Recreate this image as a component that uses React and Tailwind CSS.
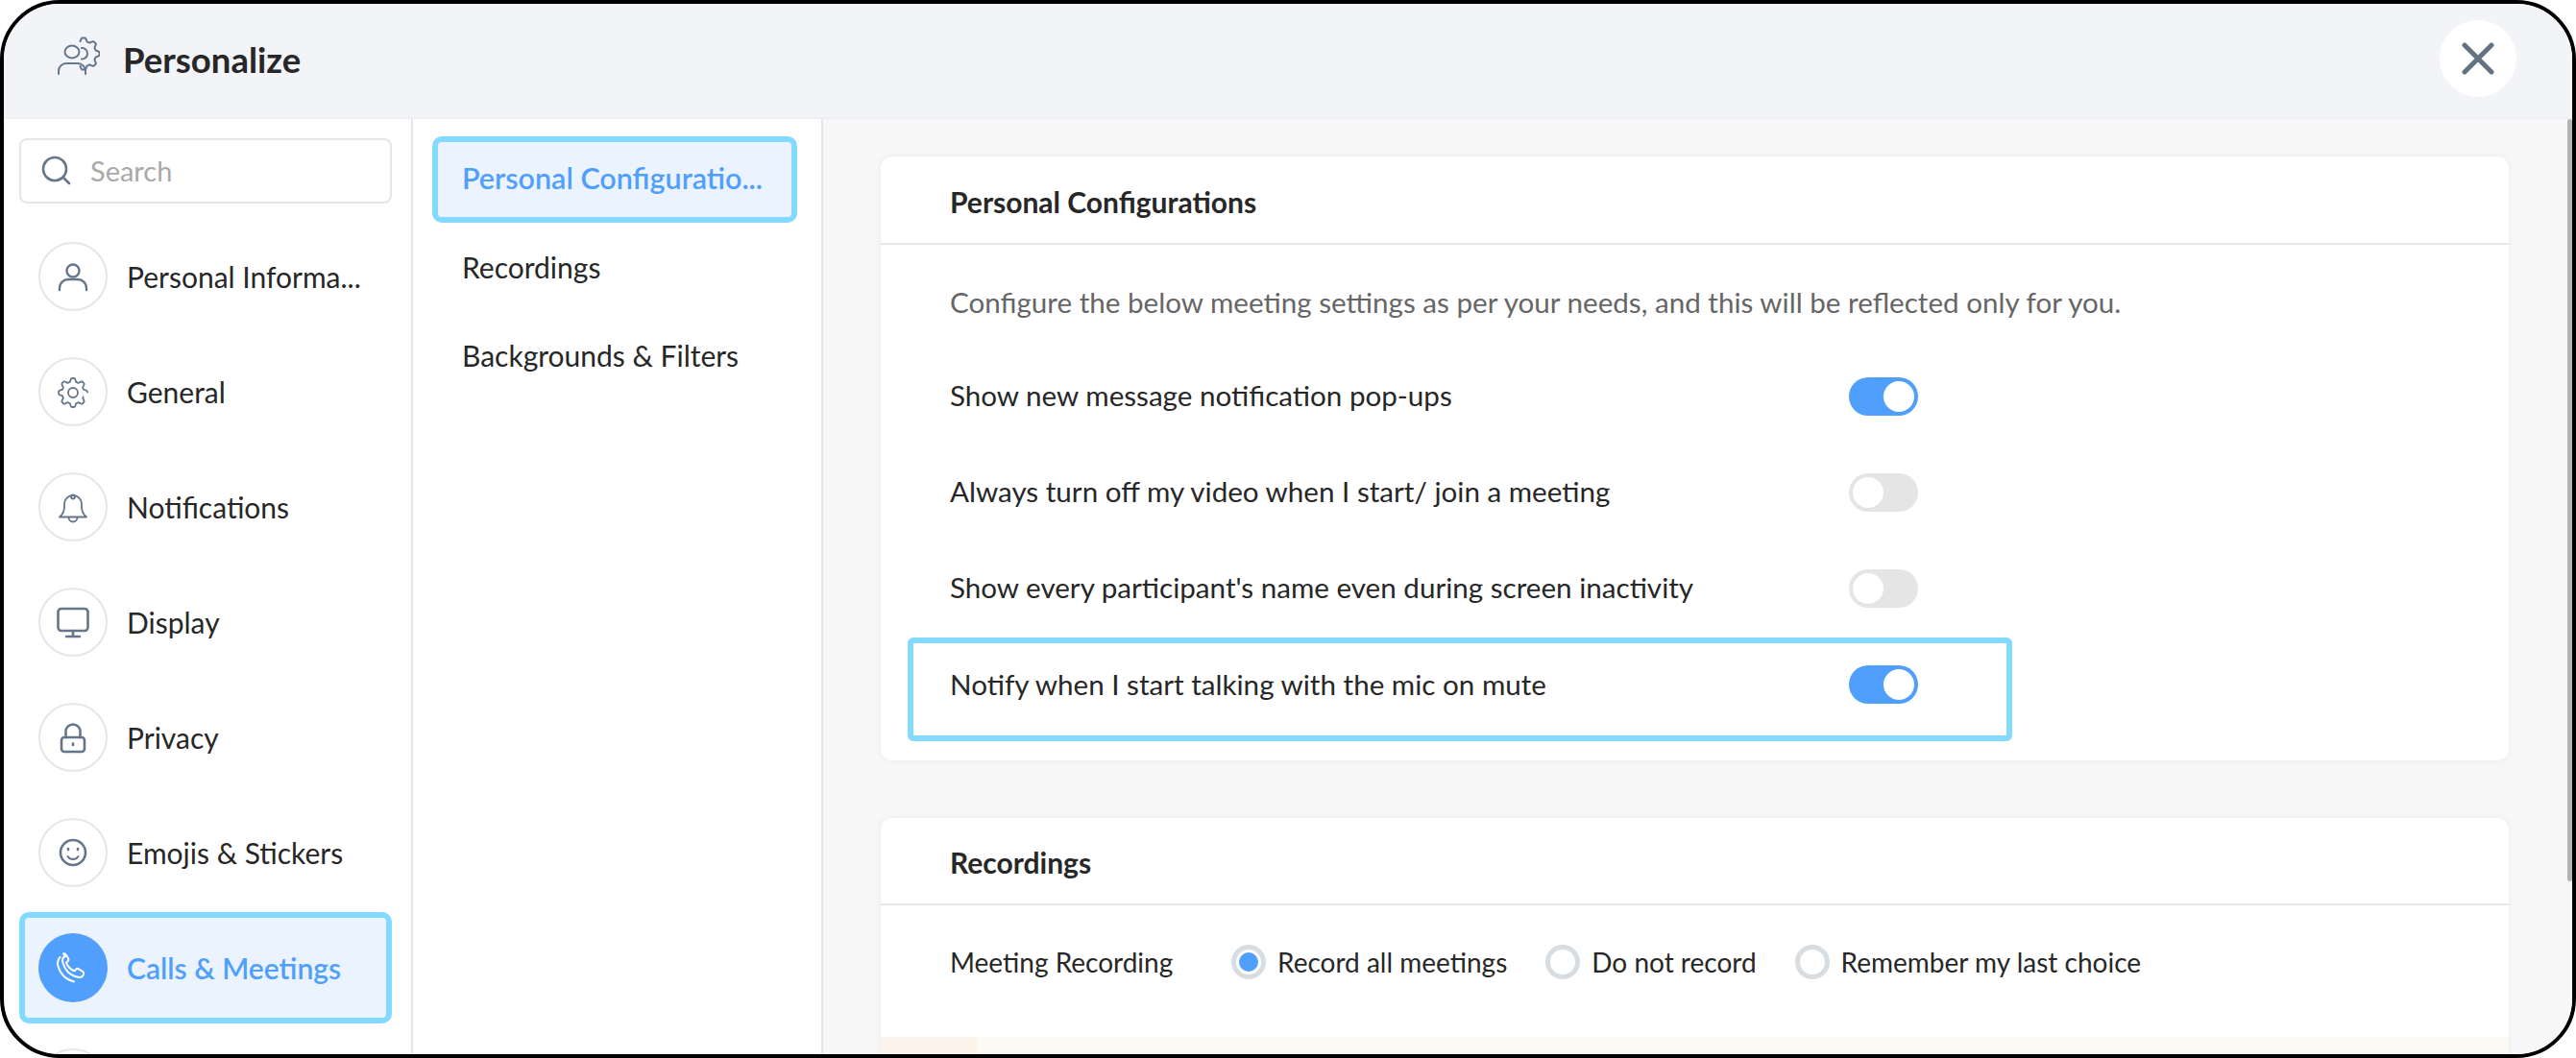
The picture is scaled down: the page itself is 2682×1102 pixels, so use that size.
import React from "react";

// wavy gear outline, sampled so the lobes stay round
const gearPath = (cx, cy, inner, outer, teeth, from = 0, to = 360) => {
  const pts = [];
  for (let a = from; a <= to; a += 3) {
    const rad = (a * Math.PI) / 180;
    const wave = Math.max(-0.6, Math.min(0.6, Math.cos(rad * teeth))) / 1.2 + 0.5;
    const r = inner + (outer - inner) * wave;
    pts.push(`${(cx + r * Math.cos(rad)).toFixed(2)} ${(cy + r * Math.sin(rad)).toFixed(2)}`);
  }
  return "M" + pts.join("L") + (to - from >= 360 ? "Z" : "");
};

const NavSvg = ({ children, color = "#65758a", width = 2 }) => (
  <svg width="72" height="72" viewBox="0 0 72 72" fill="none" stroke={color} strokeWidth={width} strokeLinecap="round" strokeLinejoin="round">
    {children}
  </svg>
);

const PersonIcon = () => (
  <NavSvg width={2.4}>
    <circle cx="36" cy="30" r="6.5" />
    <path d="M22 50v-2a9 9 0 0 1 9-9h10a9 9 0 0 1 9 9v2" />
  </NavSvg>
);
const GearIcon = () => (
  <NavSvg width={1.8}>
    <path d={gearPath(36, 37, 11.5, 15, 8, 22)} />
    <circle cx="36" cy="37" r="5" />
  </NavSvg>
);
const BellIcon = () => (
  <NavSvg width={1.8}>
    <path d="M22 46.5c3-2.5 5-6 5-10.5v-3a9 9 0 0 1 18 0v3c0 4.500 2 8 5 10.500z" />
    <circle cx="36" cy="25.500" r="2" />
    <path d="M31.500 47a4.500 4.500 0 0 0 9 0" />
  </NavSvg>
);
const MonitorIcon = () => (
  <NavSvg width={2.6}>
    <rect x="20.500" y="22" width="31" height="23" rx="3.500" />
    <path d="M36 45v5.500M29 51h14" />
  </NavSvg>
);
const LockIcon = () => (
  <NavSvg width={2.6}>
    <rect x="24" y="36" width="24" height="15" rx="3" />
    <path d="M28.500 36v-6a7.500 7.500 0 0 1 15 0v6" />
    <path d="M36 42.500v1.500" />
  </NavSvg>
);
const SmileIcon = () => (
  <NavSvg width={2.6}>
    <circle cx="36" cy="36" r="13" />
    <path d="M31 32v1M41 32v1" />
    <path d="M30.500 40a6.500 6.500 0 0 0 11 0" strokeWidth="2" />
  </NavSvg>
);
const PhoneIcon = () => (
  <NavSvg color="#ffffff" width={2}>
    <path d="M28 24c-2.500 1-3.500 3.500-2.500 7 2 7 7 12.500 14.500 14.500 3.500 1 6 0 7-2.500.5-1.500 0-2.500-1-3.200l-4-2.500c-1-.6-2-.5-2.800.3l-1.700 1.700c-3.500-1-7.500-5-8.500-8.500l1.700-1.700c.8-.8.9-1.800.3-2.800l-2.500-4c-.7-1-1.500-1.300-2.500-.8z" />
    <path d="M22.500 25c-2.500 2.500-3 6-2 9.500 2.500 8 8.500 14 16.500 16" />
  </NavSvg>
);

const navItems = [
  { label: "Personal Informa...", Icon: PersonIcon },
  { label: "General", Icon: GearIcon },
  { label: "Notifications", Icon: BellIcon },
  { label: "Display", Icon: MonitorIcon },
  { label: "Privacy", Icon: LockIcon },
  { label: "Emojis & Stickers", Icon: SmileIcon },
];

const settings = [
  { label: "Show new message notification pop-ups", on: true },
  { label: "Always turn off my video when I start/ join a meeting", on: false },
  { label: "Show every participant's name even during screen inactivity", on: false },
];

const Toggle = ({ on }) => (
  <div className={`w-[72px] h-[40px] rounded-full p-[4px] flex ${on ? "bg-[#519ffc] justify-end" : "bg-[#e5e5e5] justify-start"}`}>
    <div className="w-[32px] h-[32px] rounded-full bg-white" />
  </div>
);

const Radio = ({ label, checked }) => (
  <div className="flex items-center gap-[12px]">
    <div className="w-[36px] h-[36px] rounded-full border-[5px] border-[#d7dde1] flex items-center justify-center">
      {checked && <div className="w-[20px] h-[20px] rounded-full bg-[#519ffc] shrink-0" />}
    </div>
    <span>{label}</span>
  </div>
);

export default function App() {
  return (
    <div className="relative w-[2682px] h-[1102px] bg-white">
      <div
        className="w-full h-full border-[4px] border-black rounded-[62px] overflow-hidden flex flex-col text-[30px] text-[#272727]"
        style={{ fontFamily: "Lato, 'Open Sans', sans-serif" }}
      >
        {/* Header */}
        <div className="h-[120px] shrink-0 bg-[#f2f4f8] border-b-2 border-[#eef0f3] flex items-center pl-[52px] pr-[58px]">
          <svg className="-mt-[8px]" width="48" height="44" viewBox="56 38 48 44" fill="none" stroke="#65758a" strokeWidth="2" strokeLinecap="round" strokeLinejoin="round">
            <ellipse cx="75" cy="55" rx="7.500" ry="6.500" />
            <path d="M61 78v-3a8 8 0 0 1 8-8h12a8 8 0 0 1 8 8v3" />
            <path d="M85 51a5.500 5.500 0 0 1 6 6a5.500 5.500 0 0 1-6 5.500" />
            <path d={gearPath(87, 57, 13, 16.500, 8, -105, 105)} />
          </svg>
          <h1 className="ml-[24px] text-[36.500px] font-bold leading-none -mt-[2px]">Personalize</h1>
          <button className="ml-auto w-[80px] h-[80px] rounded-full bg-white flex items-center justify-center -mt-[4px]">
            <svg width="34" height="34" viewBox="0 0 34 34" stroke="#647382" strokeWidth="5" strokeLinecap="round">
              <path d="M3 3l28 28M31 3L3 31" />
            </svg>
          </button>
        </div>

        <div className="flex-1 flex min-h-0">
          {/* Main nav */}
          <div className="w-[426px] shrink-0 border-r-2 border-[#e6e6e6] overflow-hidden pt-[20px] pl-[16px] pr-[20px]">
            <div className="h-[68px] border-2 border-[#e6e6e6] rounded-[8px] flex items-center pl-[19px] mb-[40px] text-[29px]">
              <svg width="36" height="36" viewBox="0 0 36 36" fill="none" stroke="#65758a" strokeWidth="2.600" strokeLinecap="round">
                <circle cx="16" cy="16" r="12" />
                <path d="M25 25l6 6" />
              </svg>
              <span className="ml-[17px] text-[#a9a9a9]">Search</span>
            </div>
            <div className="flex flex-col gap-[48px]">
              {navItems.map(({ label, Icon }) => (
                <div key={label} className="flex items-center pl-[20px] h-[72px]">
                  <div className="w-[72px] h-[72px] rounded-full border-2 border-[#e6e6e6] flex items-center justify-center">
                    <div className="w-[72px] h-[72px] shrink-0"><Icon /></div>
                  </div>
                  <span className="ml-[20px] whitespace-nowrap">{label}</span>
                </div>
              ))}
            </div>
            <div className="mt-[26px] h-[116px] border-[6px] border-[#84d9ff] rounded-[10px] bg-[#ebf4fe] flex items-center pl-[14px]">
              <div className="w-[72px] h-[72px] rounded-full bg-[#519ffc]"><PhoneIcon /></div>
              <span className="ml-[20px] font-semibold text-[#519ffc] whitespace-nowrap">Calls &amp; Meetings</span>
            </div>
            <div className="mt-[26px] ml-[20px] w-[72px] h-[72px] rounded-full border-2 border-[#e6e6e6]" />
          </div>

          {/* Sub nav */}
          <div className="w-[427px] shrink-0 border-r-2 border-[#e6e6e6] pt-[18px] pl-[20px] pr-[25px]">
            <div className="h-[90px] border-[6px] border-[#84d9ff] rounded-[10px] bg-[#ebf4fe] flex items-center pl-[25px] pb-[2px] text-[#519ffc] font-semibold text-[30.500px]">
              Personal Configuratio...
            </div>
            <div className="h-[92px] flex items-center pl-[31px] mt-[2px] pb-[3px]">Recordings</div>
            <div className="h-[92px] flex items-center pl-[31px] pb-[3px]">Backgrounds &amp; Filters</div>
          </div>

          {/* Content */}
          <div className="relative flex-1 bg-[#f7f7f7] pt-[39px] pl-[60px] pr-[66px] overflow-hidden">
            <div className="bg-white rounded-[12px] shadow-[0_0_6px_rgba(0,0,0,0.06)] h-[629px]">
              <div className="h-[92px] pt-[4px] border-b-2 border-[#e6e6e6] flex items-center pl-[72px] font-bold">Personal Configurations</div>
              <div className="pl-[72px] pt-[14px]">
                <div className="h-[94px] flex items-center text-[#666666] text-[29.600px] pb-[2px]">
                  Configure the below meeting settings as per your needs, and this will be reflected only for you.
                </div>
                {settings.map((s) => (
                  <div key={s.label} className="h-[100px] flex items-center text-[29.600px]">
                    <span className="w-[936px] shrink-0 pb-[2px]">{s.label}</span>
                    <Toggle on={s.on} />
                  </div>
                ))}
                <div className="-ml-[44px] mt-[1px] w-[1150px] h-[108px] border-[6px] border-[#84d9ff] rounded-[6px] flex items-center pl-[38px] pb-[10px] text-[29.600px]">
                  <span className="w-[936px] shrink-0">Notify when I start talking with the mic on mute</span>
                  <Toggle on />
                </div>
              </div>
            </div>

            <div className="mt-[60px] bg-white rounded-[12px] shadow-[0_0_6px_rgba(0,0,0,0.06)] h-[300px] overflow-hidden">
              <div className="h-[91px] pt-[4px] border-b-2 border-[#e6e6e6] flex items-center pl-[72px] font-bold">Recordings</div>
              <div className="h-[137px] pb-[20px] flex items-center pl-[72px] text-[28px]">
                <span className="w-[293px] shrink-0">Meeting Recording</span>
                <div className="flex items-center gap-[40px]">
                  <Radio label="Record all meetings" checked />
                  <Radio label="Do not record" />
                  <Radio label="Remember my last choice" />
                </div>
              </div>
              <div className="h-[40px] bg-[#fdf9f4] flex">
                <div className="w-[100px] bg-[#fcf3ea]" />
              </div>
            </div>

            {/* scrollbar thumb */}
            <div className="absolute top-0 right-0 w-[5px] h-[794px] bg-[#b4b4b4] rounded-full" />
          </div>
        </div>
      </div>
    </div>
  );
}
